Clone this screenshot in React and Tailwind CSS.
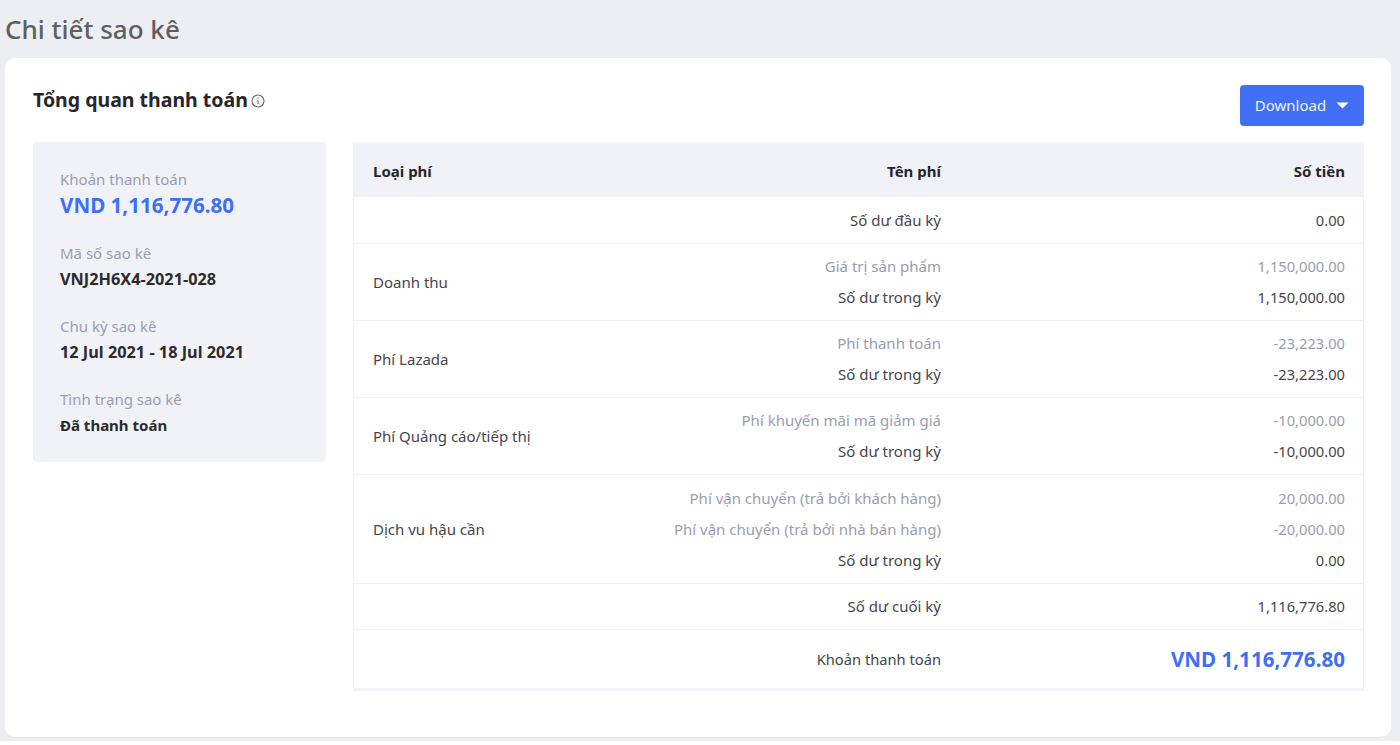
const font = { fontFamily: '"Noto Sans", sans-serif' };

function Info({ label, value, blue, size, gap }) {
  return (
    <div className={gap}>
      <div className="text-[15px] leading-[24px] text-[#9a9db0]">{label}</div>
      <div className={`mt-[1px] leading-[26px] font-bold ${blue ? "text-[20.6px] text-[#3f6ff5]" : `${size} text-[#2b2b2f]`}`}>{value}</div>
    </div>
  );
}

const rows = [
  { h: "h-[47px] pt-[1px]", lines: [["Số dư đầu kỳ", "0.00"]] },
  { h: "h-[77px]", type: "Doanh thu", lines: [["Giá trị sản phẩm", "1,150,000.00", 1], ["Số dư trong kỳ", "1,150,000.00"]] },
  { h: "h-[77px]", type: "Phí Lazada", lines: [["Phí thanh toán", "-23,223.00", 1], ["Số dư trong kỳ", "-23,223.00"]] },
  { h: "h-[77px]", type: "Phí Quảng cáo/tiếp thị", lines: [["Phí khuyến mãi mã giảm giá", "-10,000.00", 1], ["Số dư trong kỳ", "-10,000.00"]] },
  { h: "h-[109px]", type: "Dịch vu hậu cần", lines: [["Phí vận chuyển (trả bởi khách hàng)", "20,000.00", 1], ["Phí vận chuyển (trả bởi nhà bán hàng)", "-20,000.00", 1], ["Số dư trong kỳ", "0.00"]] },
  { h: "h-[46px]", lines: [["Số dư cuối kỳ", "1,116,776.80"]] },
];

export default function App() {
  return (
    <div className="h-[745px] overflow-hidden bg-white" style={font}>
      <div className="h-[741px] bg-[#eceef3] pl-[5px] pr-[9px]">
        <div className="h-[58px] pt-[10px] text-[26px] leading-[38px] font-medium text-[#5f5f5f]">Chi tiết sao kê</div>
        <div className="h-[680px] rounded-[10px] border-b border-[#e4e6eb] bg-white pl-[28px] pr-[27px] pt-[27px]">
          <div className="flex h-[57px] items-start justify-between">
            <div className="flex items-center gap-[3px]">
              <span className="text-[19.5px] leading-[30px] font-bold text-[#26262a]">Tổng quan thanh toán</span>
              <svg width="14" height="14" viewBox="0 0 14 14" fill="none" stroke="#66676b" strokeWidth="1.1" className="mt-[2px]">
                <circle cx="7" cy="7" r="6" />
                <path d="M7 6.2v4" />
                <circle cx="7" cy="4.2" r="0.7" fill="#66676b" stroke="none" />
              </svg>
            </div>
            <button className="flex h-[41px] w-[124px] items-center justify-center gap-[10px] rounded-[4px] bg-[#4170f6] text-[15px] text-[#eef2ff]">
              Download
              <svg width="13" height="7" viewBox="0 0 13 7"><path d="M0.5 0.5h12L6.5 6.5z" fill="#fff" /></svg>
            </button>
          </div>
          <div className="flex items-start gap-[27px]">
            <div className="h-[320px] w-[293px] shrink-0 rounded-[4px] bg-[#f1f2f7] pl-[27px] pt-[25px]">
              <Info gap="mb-[23px]" label="Khoản thanh toán" value="VND 1,116,776.80" blue />
              <Info gap="mb-[22px]" label="Mã số sao kê" value="VNJ2H6X4-2021-028" size="text-[16.3px]" />
              <Info gap="mb-[22px]" label="Chu kỳ sao kê" value="12 Jul 2021 - 18 Jul 2021" size="text-[16.3px]" />
              <Info label="Tình trạng sao kê" value="Đã thanh toán" size="text-[15px]" />
            </div>
            <div className="flex-1 border-x border-b-[3px] border-[#f1f2f6] text-[15px] text-[#46464a]">
              <div className="flex h-[55px] items-center border-t-[2px] border-[#f6f7fa] bg-[#f1f2f7] pl-[19px] pr-[18px] pt-[1px] font-bold text-[#26262a]">
                <div className="w-[260px]">Loại phí</div>
                <div className="w-[308px] text-right">Tên phí</div>
                <div className="flex-1 text-right">Số tiền</div>
              </div>
              {rows.map((r, i) => (
                <div key={i} className={`flex items-center border-b border-[#eeeff3] pl-[19px] pr-[18px] ${r.h}`}>
                  <div className="w-[260px]">{r.type}</div>
                  <div className="flex-1">
                    {r.lines.map(([name, val, muted], j) => (
                      <div key={j} className={`flex h-[31px] items-center ${muted ? "text-[#9a9db0]" : ""}`}>
                        <div className="w-[308px] text-right whitespace-nowrap">{name}</div>
                        <div className="flex-1 text-right text-[14.7px]">{val}</div>
                      </div>
                    ))}
                  </div>
                </div>
              ))}
              <div className="flex h-[58px] items-center pl-[19px] pr-[18px]">
                <div className="w-[260px]" />
                <div className="w-[308px] text-right text-[14.7px]">Khoản thanh toán</div>
                <div className="flex-1 text-right text-[20.6px] font-bold text-[#3f6ff5]">VND 1,116,776.80</div>
              </div>
            </div>
          </div>
        </div>
      </div>
    </div>
  );
}
